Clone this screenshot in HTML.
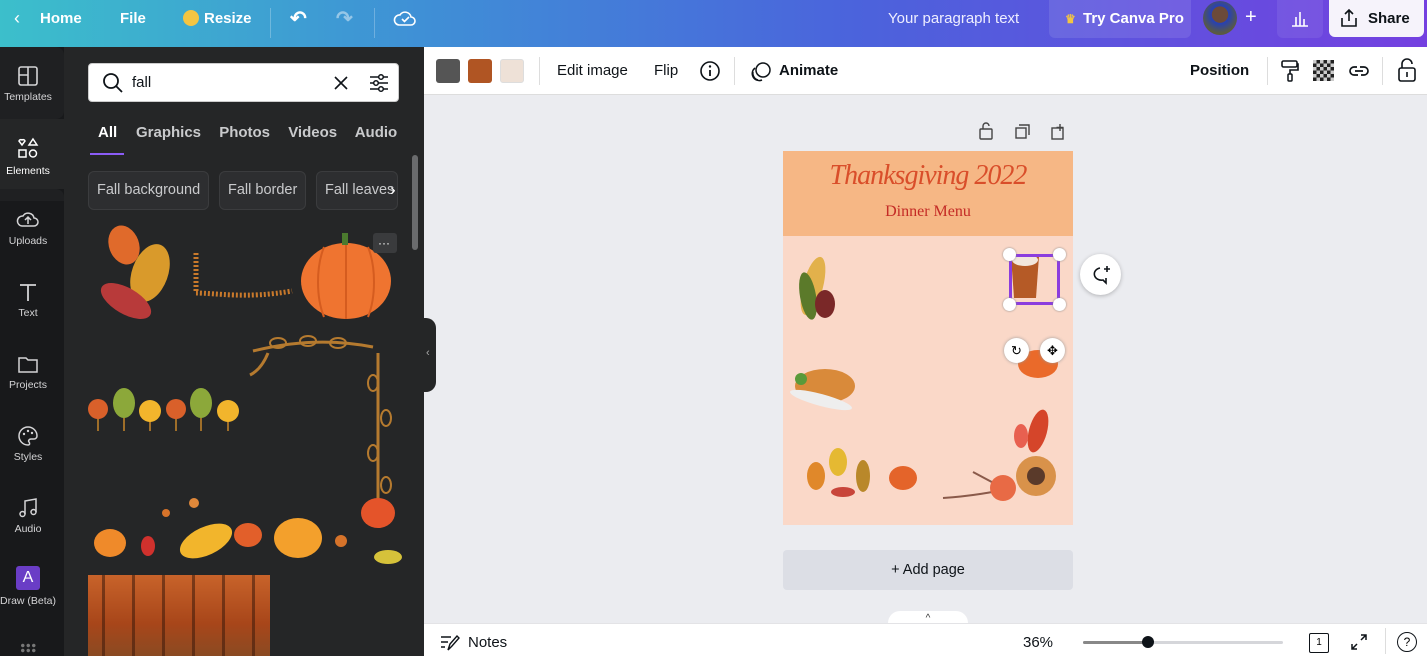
<!DOCTYPE html>
<html><head><meta charset="utf-8"><style>
*{box-sizing:border-box;margin:0;padding:0}
body{width:1427px;height:656px;overflow:hidden;font-family:"Liberation Sans",sans-serif;background:#ebecf0;position:relative}
.abs{position:absolute}
.top{left:0;top:0;width:1427px;height:47px;background:linear-gradient(90deg,#3cbfcb 0%,#3f8fd6 30%,#4b63dc 60%,#7440e0 100%);color:#fff;font-size:15px;font-weight:bold}
.top span{position:absolute;top:10px}
.rail{left:0;top:47px;width:64px;height:609px;background:#18191b}
.ri{position:absolute;left:0;width:56px;text-align:center;color:#d4d4d6;font-size:10.5px}
.ri svg{display:block;margin:0 auto 4px}
.panel{left:64px;top:47px;width:360px;height:609px;background:#252627}
.tb{left:424px;top:47px;width:1003px;height:48px;background:#fff;border-bottom:1px solid #ddd;font-size:15px;color:#0e1318;font-weight:bold}
.tb span{position:absolute;top:15px}
.chip{position:absolute;top:171px;height:39px;border:1px solid #3b3c3e;background:#2d2e30;border-radius:6px;color:#c9cacc;font-size:14.5px;line-height:37px;padding:0 8px}
</style></head><body>
<div class="abs top">
<span style="left:14px;font-weight:normal;font-size:18px;top:8px">&#8249;</span>
<span style="left:40px">Home</span><span style="left:120px">File</span>
<div class="abs" style="left:183px;top:10px;width:16px;height:16px;border-radius:50%;background:#f4c542"></div>
<span style="left:204px">Resize</span>
<div class="abs" style="left:270px;top:8px;width:1px;height:30px;background:rgba(255,255,255,.25)"></div>
<span style="left:290px;font-size:20px;top:6px">&#8630;</span><span style="left:336px;font-size:20px;top:6px;opacity:.45">&#8631;</span>
<div class="abs" style="left:374px;top:8px;width:1px;height:30px;background:rgba(255,255,255,.25)"></div>
<svg class="abs" style="left:393px;top:8px" width="24" height="20" viewBox="0 0 24 20"><path d="M6 17h12a4 4 0 0 0 0-8 6 6 0 0 0-11-2 5 5 0 0 0-1 10z" fill="none" stroke="#fff" stroke-width="1.6"/><path d="M9 11l2.5 2.5L16 9" fill="none" stroke="#fff" stroke-width="1.6"/></svg>
<span style="left:888px;font-weight:normal;color:#eef">Your paragraph text</span>
<div class="abs" style="left:1049px;top:0;width:142px;height:38px;background:rgba(255,255,255,.1);border-radius:0 0 6px 6px"></div>
<span style="left:1065px;color:#f3c542;font-size:12px;top:12px">&#9819;</span><span style="left:1083px">Try Canva Pro</span>
<div class="abs" style="left:1203px;top:1px;width:34px;height:34px;border-radius:50%;background:radial-gradient(circle at 50% 40%,#6b4a3a 30%,#2540b8 32%,#5a5a40 70%)"></div>
<span style="left:1245px;font-size:20px;top:6px;font-weight:normal">+</span>
<div class="abs" style="left:1277px;top:0;width:46px;height:38px;background:rgba(255,255,255,.08);border-radius:0 0 6px 6px"></div>
<svg class="abs" style="left:1290px;top:9px" width="20" height="18"><path d="M2 17h16M6 17V8M10 17V3M14 17V10" stroke="#fff" stroke-width="1.6"/></svg>
<div class="abs" style="left:1329px;top:0;width:95px;height:37px;background:#f6f3fb;border-radius:0 0 6px 6px;color:#0e1318"><svg class="abs" style="left:10px;top:8px" width="20" height="20"><path d="M3 10v8h14v-8M10 13V2M6 6l4-4 4 4" fill="none" stroke="#0e1318" stroke-width="1.6"/></svg><span style="left:39px;top:10px">Share</span></div>
</div>

<div class="abs rail">
<div class="abs" style="left:0;top:0;width:64px;height:72px;background:#1f2022;border-radius:0 8px 8px 0"></div>
<div class="abs" style="left:0;top:72px;width:64px;height:70px;background:#252627"></div>
<div class="abs" style="left:0;top:142px;width:64px;height:12px;background:#1f2022;border-radius:0 8px 0 0"></div>
<div class="ri" style="top:18px"><svg width="22" height="22"><rect x="2" y="2" width="18" height="18" rx="2" fill="none" stroke="#d4d4d6" stroke-width="1.6"/><path d="M11 2v18M2 10h9" stroke="#d4d4d6" stroke-width="1.6"/></svg>Templates</div>
<div class="ri" style="top:90px;color:#fff"><svg width="24" height="24"><path d="M3 4l3 4 3-4a2 2 0 0 0-3-1 2 2 0 0 0-3 1zM17 2l4 6h-8z" fill="none" stroke="#fff" stroke-width="1.5"/><rect x="3" y="13" width="7" height="7" fill="none" stroke="#fff" stroke-width="1.5"/><circle cx="17" cy="16.5" r="3.5" fill="none" stroke="#fff" stroke-width="1.5"/></svg>Elements</div>
<div class="ri" style="top:162px"><svg width="24" height="22"><path d="M6 17h12a4 4 0 0 0 0-8 6 6 0 0 0-11-2 5 5 0 0 0-1 10zM12 15V8M9 11l3-3 3 3" fill="none" stroke="#d4d4d6" stroke-width="1.5"/></svg>Uploads</div>
<div class="ri" style="top:234px"><svg width="22" height="22"><path d="M3 4h16M11 4v16" stroke="#d4d4d6" stroke-width="1.8"/></svg>Text</div>
<div class="ri" style="top:306px"><svg width="22" height="22"><path d="M2 5h7l2 2h9v12H2z" fill="none" stroke="#d4d4d6" stroke-width="1.5"/></svg>Projects</div>
<div class="ri" style="top:378px"><svg width="22" height="22"><path d="M11 2a9 9 0 1 0 0 18c2 0 2-2 1-3s0-3 2-3h3a3 3 0 0 0 3-3c0-5-4-9-9-9z" fill="none" stroke="#d4d4d6" stroke-width="1.5"/><circle cx="7" cy="9" r="1.2" fill="#d4d4d6"/><circle cx="11" cy="6" r="1.2" fill="#d4d4d6"/><circle cx="15" cy="8" r="1.2" fill="#d4d4d6"/></svg>Styles</div>
<div class="ri" style="top:450px"><svg width="22" height="22"><path d="M8 17V4l11-2v13" fill="none" stroke="#d4d4d6" stroke-width="1.5"/><circle cx="5.5" cy="17" r="2.5" fill="none" stroke="#d4d4d6" stroke-width="1.5"/><circle cx="16.5" cy="15" r="2.5" fill="none" stroke="#d4d4d6" stroke-width="1.5"/></svg>Audio</div>
<div class="abs" style="left:16px;top:519px;width:24px;height:24px;background:#6a3dc6;border-radius:3px;color:#fff;text-align:center;font-size:16px;line-height:24px">A</div>
<div class="ri" style="top:548px;left:-2px;width:60px">Draw (Beta)</div>
<div class="abs" style="left:20px;top:596px;width:16px;height:10px;background:radial-gradient(circle,#777 1.5px,transparent 2px) 0 0/5.5px 5px"></div>
</div>

<div class="abs panel">
<div class="abs" style="left:24px;top:16px;width:311px;height:39px;background:#fff;border-radius:4px;border:1px solid #ccc"></div>
<svg class="abs" style="left:38px;top:25px" width="22" height="22"><circle cx="9" cy="9" r="7" fill="none" stroke="#0e1318" stroke-width="1.8"/><path d="M14 14l6 6" stroke="#0e1318" stroke-width="1.8"/></svg>
<div class="abs" style="left:68px;top:27px;font-size:15px;color:#0e1318">fall</div>
<svg class="abs" style="left:270px;top:29px" width="14" height="14"><path d="M1 1l12 12M13 1L1 13" stroke="#0e1318" stroke-width="1.6"/></svg>
<svg class="abs" style="left:304px;top:26px" width="22" height="20"><path d="M2 4h18M2 10h18M2 16h18" stroke="#0e1318" stroke-width="1.5"/><circle cx="13" cy="4" r="2.3" fill="#fff" stroke="#0e1318" stroke-width="1.5"/><circle cx="8" cy="10" r="2.3" fill="#fff" stroke="#0e1318" stroke-width="1.5"/><circle cx="13" cy="16" r="2.3" fill="#fff" stroke="#0e1318" stroke-width="1.5"/></svg>
<div class="abs" style="top:77px;left:34px;font-size:15px;color:#fff;font-weight:bold">All</div>
<div class="abs" style="left:26px;top:106px;width:34px;height:2px;background:#8b5cf6"></div>
<div class="abs" style="top:77px;left:72px;font-size:15px;color:#c9cacc;font-weight:bold;word-spacing:14px">Graphics Photos Videos Audio</div>
<div class="abs" style="left:348px;top:108px;width:6px;height:95px;background:#6a6b6d;border-radius:3px"></div>
<div class="chip" style="left:24px;top:124px">Fall background</div>
<div class="chip" style="left:155px;top:124px">Fall border</div>
<div class="chip" style="left:252px;top:124px;width:82px;overflow:hidden;white-space:nowrap">Fall leaves</div>
<div class="abs" style="left:326px;top:133px;color:#fff;font-size:17px">&#8250;</div>
<svg class="abs" style="left:24px;top:176px" width="320" height="400">
<ellipse cx="36" cy="22" rx="15" ry="20" fill="#e06a2b" transform="rotate(-20 36 22)"/>
<ellipse cx="62" cy="50" rx="18" ry="30" fill="#d99a2b" transform="rotate(20 62 50)"/>
<ellipse cx="38" cy="78" rx="28" ry="13" fill="#b83a3a" transform="rotate(30 38 78)"/>
<path d="M108 30v40c20 0 50 6 96-2" fill="none" stroke="#c9792b" stroke-width="5" stroke-dasharray="2 2"/>
<ellipse cx="258" cy="58" rx="45" ry="38" fill="#ef7430"/><path d="M258 20v76M236 24c-8 20-8 50 0 70M280 24c8 20 8 50 0 70" stroke="#d55c1f" stroke-width="2" fill="none"/><rect x="254" y="10" width="6" height="12" fill="#4b7a2e"/>
<rect x="285" y="10" width="24" height="20" rx="3" fill="#3a3b3d"/><text x="290" y="24" fill="#fff" font-size="12">···</text>
<path d="M165 128c40-10 80-12 120-4M290 130v170M180 130c-4 10-10 18-18 22" fill="none" stroke="#b57a2f" stroke-width="3"/>
<g fill="none" stroke="#b57a2f" stroke-width="2"><ellipse cx="190" cy="120" rx="8" ry="5"/><ellipse cx="220" cy="118" rx="8" ry="5"/><ellipse cx="250" cy="120" rx="8" ry="5"/><ellipse cx="285" cy="160" rx="5" ry="8"/><ellipse cx="298" cy="195" rx="5" ry="8"/><ellipse cx="285" cy="230" rx="5" ry="8"/><ellipse cx="298" cy="262" rx="5" ry="8"/></g>
<g><path d="M10 190v18M36 186v22M62 190v18M88 190v18M113 186v22M140 190v18" stroke="#c8852a" stroke-width="1.5"/><circle cx="10" cy="186" r="10" fill="#d9602a"/><ellipse cx="36" cy="180" rx="11" ry="15" fill="#8ca83a"/><circle cx="62" cy="188" r="11" fill="#f2b52c"/><circle cx="88" cy="186" r="10" fill="#d9602a"/><ellipse cx="113" cy="180" rx="11" ry="15" fill="#8ca83a"/><circle cx="140" cy="188" r="11" fill="#f2b52c"/></g>
<g><ellipse cx="22" cy="320" rx="16" ry="14" fill="#ef8a2a"/><ellipse cx="60" cy="323" rx="7" ry="10" fill="#d0312d"/><ellipse cx="118" cy="318" rx="28" ry="14" fill="#f2b52c" transform="rotate(-25 118 318)"/><ellipse cx="160" cy="312" rx="14" ry="12" fill="#e25f2a"/><ellipse cx="210" cy="315" rx="24" ry="20" fill="#f3a02c"/><ellipse cx="290" cy="290" rx="17" ry="15" fill="#e4542a"/><ellipse cx="300" cy="334" rx="14" ry="7" fill="#d6c23a"/><circle cx="106" cy="280" r="5" fill="#e0883a"/><circle cx="78" cy="290" r="4" fill="#d6732a"/><circle cx="253" cy="318" r="6" fill="#d6732a"/></g>
</svg>
<div class="abs" style="left:24px;top:528px;width:182px;height:81px;background:linear-gradient(180deg,#c8632a,#a8461a 60%,#8a4a22);"></div>
<div class="abs" style="left:24px;top:528px;width:182px;height:81px;background:repeating-linear-gradient(90deg,transparent 0 14px,rgba(60,25,10,.55) 14px 17px,transparent 17px 30px)"></div>
</div>
<div class="abs" style="left:424px;top:318px;width:12px;height:74px;background:#252627;border-radius:0 10px 10px 0"></div>
<div class="abs" style="left:426px;top:347px;color:#aaa;font-size:11px">&#8249;</div>

<div class="abs tb">
<div class="abs" style="left:12px;top:12px;width:24px;height:24px;background:#555;border-radius:3px"></div>
<div class="abs" style="left:44px;top:12px;width:24px;height:24px;background:#b05523;border-radius:3px"></div>
<div class="abs" style="left:76px;top:12px;width:24px;height:24px;background:#eee1d7;border-radius:3px;border:1px solid #ddd"></div>
<div class="abs" style="left:115px;top:10px;width:1px;height:28px;background:#ddd"></div>
<span style="left:133px;font-weight:normal">Edit image</span><span style="left:230px;font-weight:normal">Flip</span>
<svg class="abs" style="left:275px;top:13px" width="22" height="22"><circle cx="11" cy="11" r="9" fill="none" stroke="#0e1318" stroke-width="1.6"/><path d="M11 10v6" stroke="#0e1318" stroke-width="1.8"/><circle cx="11" cy="6.5" r="1.2" fill="#0e1318"/></svg>
<div class="abs" style="left:310px;top:10px;width:1px;height:28px;background:#ddd"></div>
<svg class="abs" style="left:326px;top:13px" width="22" height="22"><circle cx="13" cy="10" r="7" fill="none" stroke="#0e1318" stroke-width="1.5"/><path d="M5 8a7 7 0 0 0 7 12M3 12a7 7 0 0 0 5 8" fill="none" stroke="#0e1318" stroke-width="1.5"/></svg>
<span style="left:355px">Animate</span>
<span style="left:766px">Position</span>
<div class="abs" style="left:843px;top:10px;width:1px;height:28px;background:#ddd"></div>
<svg class="abs" style="left:856px;top:12px" width="20" height="24"><rect x="2" y="2" width="15" height="6" rx="1.5" fill="none" stroke="#0e1318" stroke-width="1.6"/><path d="M17 5h1v6h-8v4" fill="none" stroke="#0e1318" stroke-width="1.6"/><rect x="8" y="15" width="4" height="7" rx="1" fill="none" stroke="#0e1318" stroke-width="1.5"/></svg>
<div class="abs" style="left:889px;top:13px;width:21px;height:21px;background:repeating-conic-gradient(#222 0 25%,#ccc 0 50%) 0 0/7px 7px"></div>
<svg class="abs" style="left:924px;top:14px" width="22" height="20"><path d="M9 6H6a4 4 0 0 0 0 8h4M13 14h3a4 4 0 0 0 0-8h-4M7 10h8" fill="none" stroke="#0e1318" stroke-width="1.7"/></svg>
<div class="abs" style="left:958px;top:10px;width:1px;height:28px;background:#ddd"></div>
<svg class="abs" style="left:973px;top:10px" width="20" height="26"><path d="M5 11V7a5 5 0 0 1 10 0" fill="none" stroke="#0e1318" stroke-width="1.6"/><rect x="2" y="11" width="16" height="13" rx="2" fill="none" stroke="#0e1318" stroke-width="1.6"/><path d="M10 15v5" stroke="#0e1318" stroke-width="1.6"/></svg>
</div>

<svg class="abs" style="left:976px;top:122px" width="100" height="20"><g fill="none" stroke="#444" stroke-width="1.4"><rect x="4" y="7" width="12" height="10" rx="1"/><path d="M7 7V4a3 3 0 0 1 6 0"/><rect x="40" y="6" width="10" height="10"/><path d="M43 3h10v10"/><rect x="76" y="6" width="11" height="11"/><path d="M84 2v7M80.5 5.5h7"/></g></svg>
<div class="abs" style="left:783px;top:151px;width:290px;height:374px;background:#fad8c8"></div>
<div class="abs" style="left:783px;top:151px;width:290px;height:85px;background:#f6b785"></div>
<div class="abs" style="left:783px;top:160px;width:290px;text-align:center;font-family:'Liberation Serif',serif;font-style:italic;font-size:28px;color:#d94e2a;letter-spacing:-1px">Thanksgiving 2022</div>
<div class="abs" style="left:783px;top:203px;width:290px;text-align:center;font-family:'Liberation Serif',serif;font-size:16px;color:#c42b26">Dinner Menu</div>
<svg class="abs" style="left:783px;top:236px" width="290" height="289">
<ellipse cx="30" cy="50" rx="10" ry="30" fill="#e2b14b" transform="rotate(15 30 50)"/><ellipse cx="25" cy="60" rx="8" ry="24" fill="#5b7a2a" transform="rotate(-10 25 60)"/><ellipse cx="42" cy="68" rx="10" ry="14" fill="#7a2828"/>
<ellipse cx="42" cy="150" rx="30" ry="17" fill="#d98a3a"/><ellipse cx="38" cy="164" rx="32" ry="6" fill="#eee" transform="rotate(15 38 164)"/><circle cx="18" cy="143" r="6" fill="#5a9a3a"/>
<path d="M228 20h28l-3 42h-22z" fill="#b55a26"/><ellipse cx="242" cy="24" rx="13" ry="6" fill="#f2e6dc"/>
<ellipse cx="255" cy="128" rx="20" ry="14" fill="#ea6a2a"/>
<g fill="#e0882a"><ellipse cx="33" cy="240" rx="9" ry="14"/><ellipse cx="55" cy="226" rx="9" ry="14" fill="#e5b932"/><ellipse cx="80" cy="240" rx="7" ry="16" fill="#b9882a"/><ellipse cx="120" cy="242" rx="14" ry="12" fill="#e4642a"/><ellipse cx="60" cy="256" rx="12" ry="5" fill="#c8453a"/></g>
<path d="M160 262c30-2 50-6 70-10M190 236l30 16" stroke="#8a5a4a" stroke-width="2" fill="none"/><circle cx="220" cy="252" r="13" fill="#e86a45"/><circle cx="253" cy="240" r="20" fill="#d9924a"/><circle cx="253" cy="240" r="9" fill="#5a3a2a"/>
<ellipse cx="255" cy="195" rx="9" ry="22" fill="#d5452a" transform="rotate(15 255 195)"/><ellipse cx="238" cy="200" rx="7" ry="12" fill="#e86050"/>
</svg>
<div class="abs" style="left:1009px;top:254px;width:51px;height:51px;border:3px solid #8b3dde"></div>
<div class="abs" style="left:1003px;top:248px;width:13px;height:13px;border-radius:50%;background:#fff;box-shadow:0 0 2px #888"></div>
<div class="abs" style="left:1053px;top:248px;width:13px;height:13px;border-radius:50%;background:#fff;box-shadow:0 0 2px #888"></div>
<div class="abs" style="left:1003px;top:298px;width:13px;height:13px;border-radius:50%;background:#fff;box-shadow:0 0 2px #888"></div>
<div class="abs" style="left:1053px;top:298px;width:13px;height:13px;border-radius:50%;background:#fff;box-shadow:0 0 2px #888"></div>
<div class="abs" style="left:1004px;top:338px;width:25px;height:25px;border-radius:50%;background:#fff;box-shadow:0 0 3px #999;text-align:center;font-size:13px;line-height:25px">&#8635;</div>
<div class="abs" style="left:1040px;top:338px;width:25px;height:25px;border-radius:50%;background:#fff;box-shadow:0 0 3px #999;text-align:center;font-size:13px;line-height:25px">&#10021;</div>
<div class="abs" style="left:1080px;top:254px;width:41px;height:41px;border-radius:50%;background:#fff;box-shadow:0 1px 4px rgba(0,0,0,.25)"></div>
<svg class="abs" style="left:1090px;top:264px" width="22" height="22"><path d="M10 4a7 6 0 1 0 3 12l3 3v-5" fill="none" stroke="#0e1318" stroke-width="1.6"/><path d="M17 2v6M14 5h6" stroke="#0e1318" stroke-width="1.6"/></svg>
<div class="abs" style="left:783px;top:550px;width:290px;height:40px;background:#dcdee5;border-radius:4px;text-align:center;line-height:40px;font-size:14.5px;color:#0e1318">+ Add page</div>
<div class="abs" style="left:888px;top:611px;width:80px;height:20px;background:#fff;border-radius:12px 12px 0 0;text-align:center;font-size:10px;color:#333;line-height:16px">^</div>
<div class="abs" style="left:424px;top:623px;width:1003px;height:33px;background:#fff;border-top:1px solid #e3e3e6"></div>
<svg class="abs" style="left:440px;top:634px" width="20" height="18"><path d="M1 3h10M1 8h7M1 13h4M8 16l2-6 7-8 2 2-7 8z" fill="none" stroke="#0e1318" stroke-width="1.4"/></svg>
<div class="abs" style="left:468px;top:634px;font-size:15px;color:#0e1318">Notes</div>
<div class="abs" style="left:1023px;top:634px;font-size:15px;color:#0e1318">36%</div>
<div class="abs" style="left:1083px;top:641px;width:200px;height:3px;background:#d5d6da;border-radius:2px"></div>
<div class="abs" style="left:1083px;top:641px;width:65px;height:3px;background:#888;border-radius:2px"></div>
<div class="abs" style="left:1142px;top:636px;width:12px;height:12px;border-radius:50%;background:#0e1318"></div>
<div class="abs" style="left:1309px;top:633px;width:20px;height:20px;border:1.5px solid #0e1318;border-radius:2px;font-size:10px;text-align:center;line-height:18px">1</div>
<svg class="abs" style="left:1350px;top:633px" width="18" height="18"><path d="M11 2h5v5M16 2l-5 5M7 16H2v-5M2 16l5-5" fill="none" stroke="#0e1318" stroke-width="1.5"/></svg>
<div class="abs" style="left:1385px;top:628px;width:1px;height:26px;background:#ddd"></div>
<div class="abs" style="left:1397px;top:632px;width:20px;height:20px;border:1.5px solid #0e1318;border-radius:50%;font-size:12px;text-align:center;line-height:18px">?</div>
</body></html>
